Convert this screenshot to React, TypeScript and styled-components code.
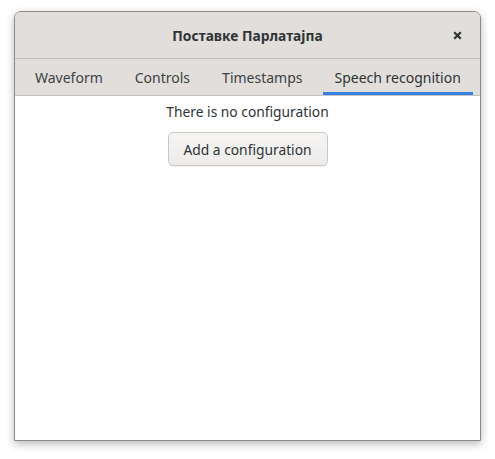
import React, { useState } from "react";
import styled, { createGlobalStyle } from "styled-components";

const Global = createGlobalStyle`
  html, body { margin: 0; padding: 0; background: #ffffff; }
  body { font-family: "Noto Sans", "Open Sans", sans-serif; }
`;

const Desktop = styled.div`
  width: 495px;
  height: 459px;
  padding: 11px 14px 0 14px;
  box-sizing: border-box;
`;

const Window = styled.div`
  width: 467px;
  height: 430px;
  box-sizing: border-box;
  border: 1px solid #8a8a8a;
  border-radius: 7px 7px 0 0;
  background: #ffffff;
  display: flex;
  flex-direction: column;
  overflow: hidden;
  box-shadow: 0 3px 9px rgba(0, 0, 0, 0.28);
`;

const HeaderBar = styled.div`
  height: 46px;
  flex: none;
  display: grid;
  grid-template-columns: 46px 1fr 46px;
  align-items: center;
  background: #e1dedb;
  border-bottom: 1px solid #c0bdb8;
`;

const Title = styled.div`
  grid-column: 2;
  text-align: center;
  font-weight: 700;
  font-size: 13.8px;
  color: #2e3436;
`;

const CloseButton = styled.button`
  grid-column: 3;
  justify-self: center;
  width: 24px;
  height: 24px;
  display: flex;
  align-items: center;
  justify-content: center;
  background: none;
  border: none;
  padding: 0;
  color: #2e3436;
`;

const TabBar = styled.div`
  height: 36px;
  flex: none;
  display: flex;
  gap: 8px;
  padding: 0 8px;
  background: #e1dedb;
  border-bottom: 1px solid #c8c5c0;
`;

const Tab = styled.div<{ $active?: boolean }>`
  flex: none;
  white-space: nowrap;
  padding: 0 12px;
  display: flex;
  align-items: center;
  font-size: 14px;
  color: ${(p) => (p.$active ? "#2e3436" : "#3d4244")};
  box-shadow: ${(p) => (p.$active ? "inset 0 -3px 0 #3584e4" : "none")};
  cursor: pointer;
`;

const Content = styled.div`
  flex: 1;
  display: flex;
  flex-direction: column;
  align-items: center;
  padding-top: 6px;
  gap: 10px;
`;

const Message = styled.div`
  font-size: 13.8px;
  color: #2e3436;
  line-height: 20px;
`;

const Button = styled.button`
  width: 160px;
  height: 34px;
  font-family: inherit;
  font-size: 13.8px;
  color: #2e3436;
  background: linear-gradient(#f6f5f4, #edebe9);
  border: 1px solid #cdc7c2;
  border-radius: 5px;
  box-shadow: 0 1px 0 rgba(0, 0, 0, 0.05);
`;

const tabs = ["Waveform", "Controls", "Timestamps", "Speech recognition"];

export default function App() {
  const [active, setActive] = useState(3);
  return (
    <Desktop>
      <Global />
      <Window>
        <HeaderBar>
          <Title>Поставке Парлатајпа</Title>
          <CloseButton aria-label="Close">
            <svg width="9" height="9" viewBox="0 0 9 9">
              <path d="M1.2 1.2 L7.8 7.8 M7.8 1.2 L1.2 7.8" stroke="#2e3436" strokeWidth="2.2" strokeLinecap="butt" />
            </svg>
          </CloseButton>
        </HeaderBar>
        <TabBar>
          {tabs.map((t, i) => (
            <Tab key={t} $active={i === active} onClick={() => setActive(i)}>
              {t}
            </Tab>
          ))}
        </TabBar>
        <Content>
          <Message>There is no configuration</Message>
          <Button>Add a configuration</Button>
        </Content>
      </Window>
    </Desktop>
  );
}
